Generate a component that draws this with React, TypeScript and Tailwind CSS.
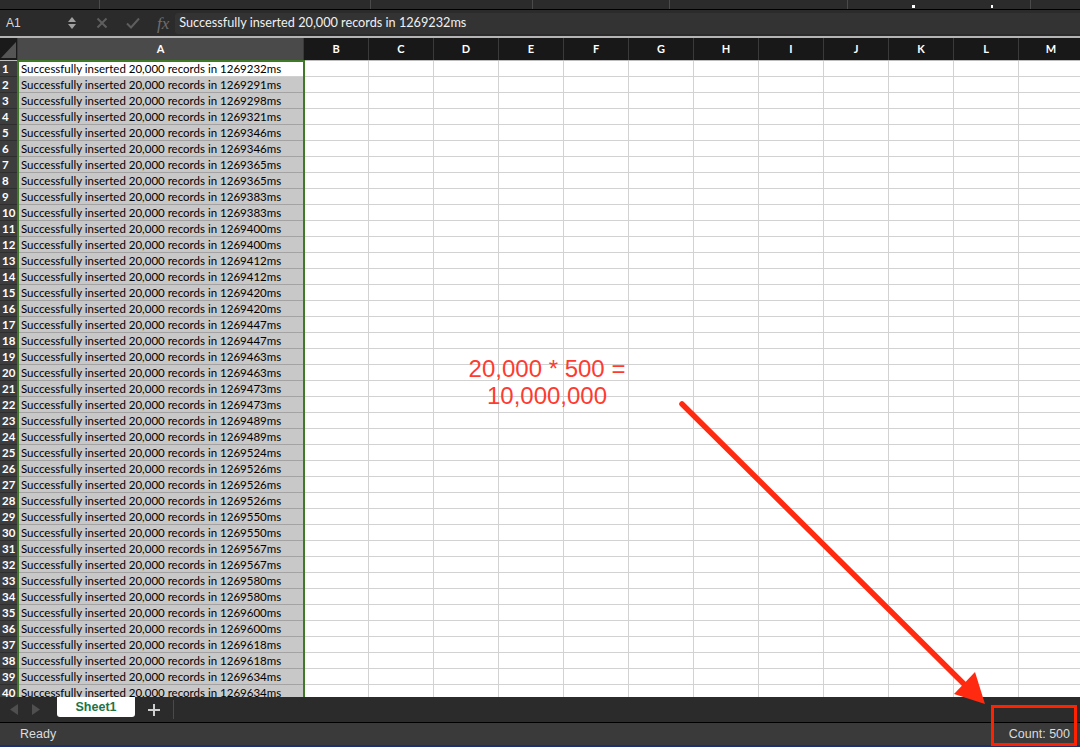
import React from 'react';

const times = [
    1269232, 1269291, 1269298, 1269321, 1269346, 1269346, 1269365, 1269365, 1269383, 1269383,
    1269400, 1269400, 1269412, 1269412, 1269420, 1269420, 1269447, 1269447, 1269463, 1269463,
    1269473, 1269473, 1269489, 1269489, 1269524, 1269526, 1269526, 1269526, 1269550, 1269550,
    1269567, 1269567, 1269580, 1269580, 1269600, 1269600, 1269618, 1269618, 1269634, 1269634,
];

const cols = ['B', 'C', 'D', 'E', 'F', 'G', 'H', 'I', 'J', 'K', 'L', 'M'];

const gridCols = 'grid grid-cols-[18px_286px_repeat(12,65px)]';

const App: React.FC = () => {
    return (
        <div className="relative w-[1080px] h-[747px] overflow-hidden bg-white flex flex-col font-['Lato',sans-serif]">
            {/* ribbon remnant */}
            <div className="h-[10px] shrink-0 bg-[#2b2b2b] border-b border-black flex">
                <div className="w-[100px] border-r border-[#4a4a4a]" />
                <div className="w-[271px] border-r border-[#4a4a4a]" />
                <div className="w-[162px] border-r border-[#4a4a4a]" />
                <div className="w-[137px] border-r border-[#4a4a4a]" />
                <div className="w-[178px] border-r border-[#4a4a4a]" />
                <div className="w-[183px] border-r border-[#4a4a4a] relative">
                    <span className="absolute left-[64px] bottom-[1px] w-[3px] h-[3px] bg-white" />
                    <span className="absolute left-[143px] bottom-[1px] w-[2px] h-[3px] bg-white" />
                </div>
            </div>

            {/* formula bar */}
            <div className="h-[26px] shrink-0 bg-[#2b2b2b] flex items-center">
                <div className="w-[64px] pl-[6px] text-[12px] text-[#d8d8d8] font-['Liberation_Sans',sans-serif]">A1</div>
                <div className="w-[16px] flex flex-col items-center gap-[2px] text-[#a0a0a0]">
                    <svg width="8" height="5" viewBox="0 0 8 5"><path d="M4 0L8 5H0z" fill="currentColor" /></svg>
                    <svg width="8" height="5" viewBox="0 0 8 5"><path d="M0 0H8L4 5z" fill="currentColor" /></svg>
                </div>
                <div className="w-[16px]" />
                <svg width="12" height="12" viewBox="0 0 12 12" className="text-[#5e5e5e]">
                    <path d="M1.5 1.5L10.5 10.5M10.5 1.5L1.5 10.5" stroke="currentColor" strokeWidth="2" />
                </svg>
                <div className="w-[18px]" />
                <svg width="14" height="12" viewBox="0 0 14 12" className="text-[#5e5e5e]">
                    <path d="M1 6.5L5 10.5L13 1.5" stroke="currentColor" strokeWidth="2" fill="none" />
                </svg>
                <div className="w-[17px]" />
                <div className="text-[17px] italic text-[#6e6e6e] font-['Liberation_Serif',serif] leading-none">fx</div>
                <div className="ml-[6px] flex-1 h-[21px] bg-[#333333] rounded-l-[3px] flex items-center pl-[4px] text-[12.7px] text-[#f0f0f0]">
                    Successfully inserted 20,000 records in 1269232ms
                </div>
            </div>
            <div className="h-[2px] shrink-0 bg-[#b4b4b4]" />

            {/* sheet */}
            <div className="relative flex-1 overflow-hidden">
                <div className={`${gridCols} h-[23px] bg-[#181818] border-b border-[#bdbdbd]`}>
                    <div className="relative bg-[#1a1a1a] border-r border-[#3a3a3a]">
                        <svg width="18" height="22" viewBox="0 0 18 22" className="absolute inset-0">
                            <path d="M16 4V20H1z" fill="#555" />
                        </svg>
                    </div>
                    <div className="bg-[#4a4a4a] border-r border-[#3a3a3a] flex items-center justify-center text-[11px] font-bold text-white">A</div>
                    {cols.map(c => (
                        <div key={c} className="border-r border-[#3a3a3a] flex items-center justify-center text-[11px] font-bold text-white">{c}</div>
                    ))}
                </div>
                {times.map((t, i) => (
                    <div key={i} className={`${gridCols} h-[16px]`}>
                        <div className="bg-[#3d3d3d] border-b border-[#2e2e2e] border-r border-r-[#2e2e2e] text-[11.5px] font-bold text-white pl-[2px] leading-[15px]">{i + 1}</div>
                        <div className={`${i === 0 ? 'bg-white border-[#d0d0d0]' : 'bg-[#c8c8c8] border-[#a3a3a3]'} border-b pl-[3px] text-[11.5px] text-black leading-[16px] whitespace-nowrap overflow-hidden`}>
                            Successfully inserted 20,000 records in {t}ms
                        </div>
                        {cols.map(c => (
                            <div key={c} className="border-r border-b border-[#d2d2d2]" />
                        ))}
                    </div>
                ))}
                {/* selection outline */}
                <div className="absolute left-[17px] top-[22px] w-[288px] h-[700px] border-2 border-[#3f7a26] pointer-events-none" />
            </div>

            {/* sheet tabs */}
            <div className="h-[25px] shrink-0 bg-[#2b2b2b] flex items-start">
                <div className="w-[57px] h-full flex items-center gap-[14px] pl-[10px] text-[#4f4f4f]">
                    <svg width="8" height="11" viewBox="0 0 8 11"><path d="M8 0V11L0 5.5z" fill="currentColor" /></svg>
                    <svg width="8" height="11" viewBox="0 0 8 11"><path d="M0 0V11L8 5.5z" fill="currentColor" /></svg>
                </div>
                <div className="w-[78px] h-[20px] bg-white rounded-b-[3px] flex items-center justify-center text-[12.5px] font-bold text-[#217346] font-['Liberation_Sans',sans-serif]">Sheet1</div>
                <div className="w-[38px] h-full flex items-center justify-center text-[#cfcfcf]">
                    <svg width="12" height="12" viewBox="0 0 12 12"><path d="M6 0V12M0 6H12" stroke="currentColor" strokeWidth="2" /></svg>
                </div>
                <div className="mt-[3px] h-[19px] border-l border-[#4a4a4a]" />
            </div>
            <div className="h-px shrink-0 bg-black" />

            {/* status bar */}
            <div className="h-[22px] shrink-0 bg-[#3a3a3a] flex items-center justify-between px-[20px] pr-[10px] text-[12.5px] text-[#dcdcdc] font-['Liberation_Sans',sans-serif]">
                <span>Ready</span>
                <span>Count: 500</span>
            </div>
            <div className="h-[2px] shrink-0 bg-[#1c2f6e]" />

            {/* annotation */}
            <div className="absolute left-[426px] top-[355px] w-[242px] text-center text-[24px] leading-[27px] text-[#ff3b30] font-['Liberation_Sans',sans-serif]">
                <div>20,000 * 500 =</div>
                <div>10,000,000</div>
            </div>
            <svg width="1080" height="747" viewBox="0 0 1080 747" className="absolute inset-0 pointer-events-none">
                <line x1="682" y1="404" x2="966" y2="686" stroke="#ff2a10" strokeWidth="5.5" strokeLinecap="round" />
                <polygon points="985,704 954,694 975,672" fill="#ff2a10" />
            </svg>
            <div className="absolute left-[991px] top-[705px] w-[86px] h-[41px] border-[3px] border-[#ff2200] pointer-events-none" />
        </div>
    );
};

export default App;
